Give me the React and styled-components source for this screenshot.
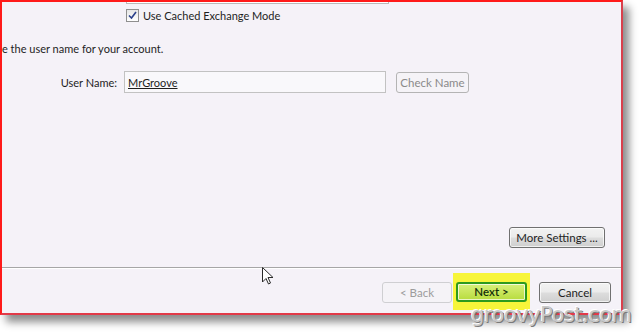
import styled, { createGlobalStyle } from 'styled-components';

const GlobalStyle = createGlobalStyle`
  html, body {
    margin: 0;
    padding: 0;
    background: #ffffff;
  }
  body {
    width: 640px;
    height: 333px;
    overflow: hidden;
    font-family: Lato, "Noto Sans", sans-serif;
  }
`;

const Page = styled.div`
  position: relative;
  width: 640px;
  height: 333px;
`;

// dialog window, cropped on the left and top
const Frame = styled.div`
  position: relative;
  box-sizing: border-box;
  width: 623px;
  height: 315px;
  background: #f5f2f8;
  border-top: 2px solid #ff1a1a;
  border-left: 2px solid #ff1a1a;
  border-right: 2px solid #d9404c;
  border-bottom: 2px solid #e23a48;
  box-shadow: 6px 7px 8px rgba(0, 0, 0, 0.45);
  display: flex;
  flex-direction: column;
  font-size: 11px;
  color: #1e1e1e;
`;

const Body = styled.div`
  flex: 1;
  display: flex;
  flex-direction: column;
`;

const CutBox = styled.div`
  margin-left: 124px;
  width: 261px;
  height: 1px;
  border: 1px solid #b9b9b9;
  border-top: none;
  background: #ffffff;
`;

const CheckRow = styled.label`
  display: flex;
  align-items: center;
  gap: 4px;
  margin: 4px 0 0 124px;
  height: 14px;
`;

const Box = styled.span`
  box-sizing: border-box;
  width: 13px;
  height: 13px;
  border: 1px solid #8f8f8f;
  background: linear-gradient(#e6e6e6, #ffffff);
  display: flex;
  align-items: center;
  justify-content: center;
`;

const Intro = styled.div`
  margin: 19px 0 0 0;
  line-height: 15px;
`;

const FieldRow = styled.div`
  display: flex;
  align-items: center;
  margin-top: 15px;
  height: 22px;
`;

const FieldLabel = styled.div`
  width: 122px;
  text-align: right;
  padding-right: 7px;
  box-sizing: border-box;
`;

const TextBox = styled.div`
  box-sizing: border-box;
  width: 262px;
  height: 22px;
  border: 1px solid #c2c2c2;
  background: #f9f8fb;
  padding: 1px 3px;
  display: flex;
  align-items: center;
`;

const Typed = styled.span`
  text-decoration: underline;
`;

const Button = styled.div`
  box-sizing: border-box;
  width: ${p => p.$w || 73}px;
  height: ${p => p.$h || 21}px;
  border: 1px solid ${p => (p.$disabled ? '#cfcfd2' : '#707070')};
  border-radius: 3px;
  display: flex;
  align-items: center;
  justify-content: center;
  font-size: 11.5px;
  color: ${p => (p.$disabled ? '#9c9c9c' : '#1e1e1e')};
  background: ${p =>
    p.$disabled
      ? '#f5f3f7'
      : 'linear-gradient(#f2f2f2 0%, #ebebeb 48%, #dddddd 52%, #cfcfcf 100%)'};
  box-shadow: ${p => (p.$disabled ? 'none' : 'inset 0 0 0 1px rgba(255,255,255,0.7)')};
`;

const CheckButton = styled(Button)`
  margin-left: 10px;
  border-color: #b4b4b4;
  color: #8a8a8a;
`;

const SettingsRow = styled.div`
  margin-top: auto;
  margin-bottom: 19px;
  display: flex;
  justify-content: flex-end;
  padding-right: 16px;
`;

const Footer = styled.div`
  height: 46px;
  border-top: 1px solid #a6a6a6;
  box-shadow: inset 0 1px 0 #ffffff;
  display: flex;
  align-items: flex-start;
  justify-content: flex-end;
  padding: 14px 10px 0 0;
  box-sizing: border-box;
`;

const Highlight = styled.div`
  background: #f7f53a;
  width: 77px;
  height: 37px;
  margin: -9px 9px 0 1px;
  display: flex;
  align-items: center;
  justify-content: center;
`;

const NextButton = styled(Button)`
  width: 71px;
  height: 20px;
  border: 2px solid #2e9a1e;
  border-radius: 3px;
  background: linear-gradient(#d8f07a 0%, #c9e65c 50%, #b7dc3e 100%);
  color: #142e0a;
  font-weight: 600;
`;

const Watermark = styled.div`
  position: absolute;
  left: 471px;
  top: 303px;
  font-family: "DejaVu Sans", "Liberation Sans", sans-serif;
  font-size: 21px;
  letter-spacing: -0.5px;
  color: #c9c9c9;
  text-shadow: 1px 1px 0 #7a7a7a, -1px -1px 0 #ffffff;
`;

const Cursor = styled.svg`
  position: absolute;
  left: 262px;
  top: 267px;
`;

function App() {
  return (
    <Page>
      <GlobalStyle />
      <Frame>
        <Body>
          <CutBox />
          <CheckRow>
            <Box>
              <svg width="9" height="9" viewBox="0 0 9 9">
                <path d="M1 4.5 L3.5 7 L8 1" fill="none" stroke="#2a3f8a" strokeWidth="1.6" />
              </svg>
            </Box>
            Use Cached Exchange Mode
          </CheckRow>
          <Intro>e the user name for your account.</Intro>
          <FieldRow>
            <FieldLabel>User Name:</FieldLabel>
            <TextBox>
              <Typed>MrGroove</Typed>
            </TextBox>
            <CheckButton $w={73} $disabled>Check Name</CheckButton>
          </FieldRow>
          <SettingsRow>
            <Button $w={96}>More Settings ...</Button>
          </SettingsRow>
        </Body>
        <Footer>
          <Button $w={70} $disabled>&lt; Back</Button>
          <Highlight>
            <NextButton>Next &gt;</NextButton>
          </Highlight>
          <Button $w={72}>Cancel</Button>
        </Footer>
      </Frame>
      <Cursor width="13" height="20" viewBox="0 0 13 20">
        <path
          d="M0.5 0.5 L0.5 15 L4 11.5 L6.5 17 L8.5 16 L6 10.5 L11 10.5 Z"
          fill="#ffffff"
          stroke="#2a2a2a"
          strokeWidth="1"
        />
      </Cursor>
      <Watermark>groovyPost.com</Watermark>
    </Page>
  );
}

export default App;
